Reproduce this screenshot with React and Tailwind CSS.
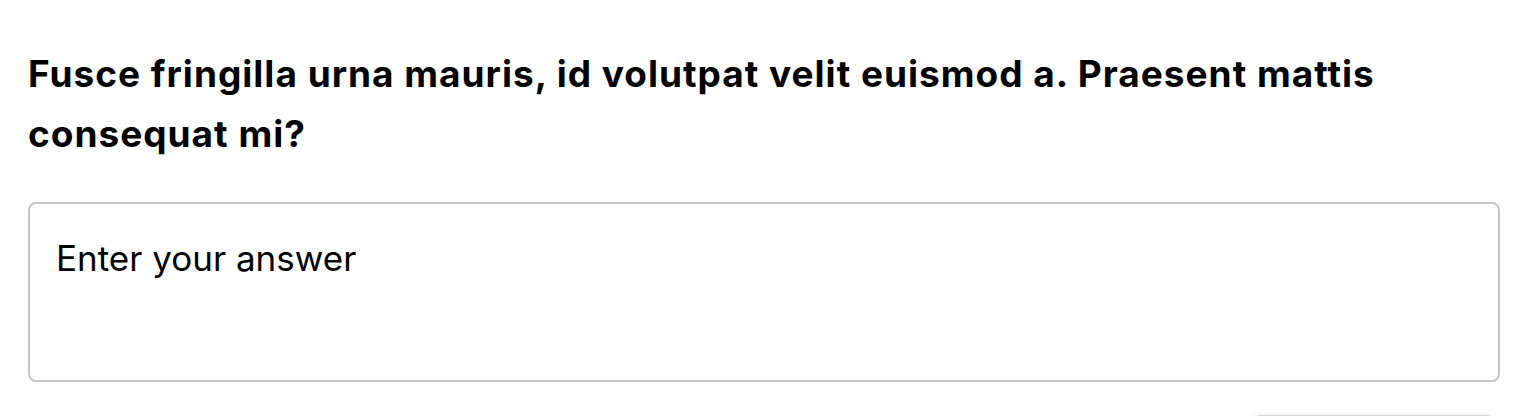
export default function App() {
  return (
    <div className="min-h-screen bg-white pl-[28px] pr-[30px] pt-[44px]" style={{ fontFamily: 'Inter, "Liberation Sans", sans-serif' }}>
      <h2 className="text-[37px] font-bold leading-[60px] tracking-[1px] text-black">
        Fusce fringilla urna mauris, id volutpat velit euismod a. Praesent mattis consequat mi?
      </h2>
      <textarea
        className="mt-[38px] block h-[180px] w-full resize-none rounded-[8px] border-2 border-[#c6c6c6] px-[26px] pt-[33px] text-[35px] leading-[42px] text-black placeholder:text-black outline-none"
        placeholder="Enter your answer"
      />
      {/* submit button, only its top edge is in view */}
      <div className="mt-[33px] flex justify-end pr-[5px]">
        <button
          aria-label="Submit"
          className="h-[60px] w-[243px] rounded-[8px] border-2 border-[#d3d8df] bg-white shadow-[0_0_8px_rgba(16,24,40,0.06)]"
        />
      </div>
    </div>
  );
}
